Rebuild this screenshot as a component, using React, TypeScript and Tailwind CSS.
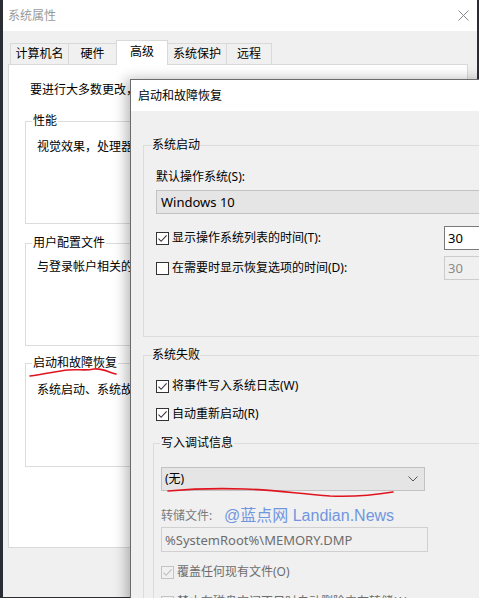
import React from 'react';

const FONT = "font-['Noto_Sans','Noto_Sans_CJK_SC',sans-serif]";

function Check({ checked, disabled }: { checked?: boolean; disabled?: boolean }) {
  return (
    <span
      className={`w-[13px] h-[13px] border flex items-center justify-center shrink-0 ${
        disabled ? 'border-[#c4c4c4] bg-[#f0f0f0]' : 'border-[#333333] bg-white'
      }`}
    >
      {checked && (
        <svg width="11" height="11" viewBox="0 0 11 11">
          <path
            d="M1.5 5.6 L4.1 8.3 L9.6 2.4"
            fill="none"
            stroke={disabled ? '#bdbdbd' : '#333333'}
            strokeWidth="1.1"
          />
        </svg>
      )}
    </span>
  );
}

function Chevron() {
  return (
    <svg width="10" height="6" viewBox="0 0 10 6">
      <path d="M0.5 0.5 L5 5 L9.5 0.5" fill="none" stroke="#555" strokeWidth="1" />
    </svg>
  );
}

export default function App() {
  return (
    <div className={`relative w-[479px] h-[598px] overflow-hidden bg-[#2a2d33] text-[12px] leading-[16px] text-black ${FONT}`}>
      {/* 系统属性 (back window) */}
      <div className="absolute left-[3px] top-0 w-[474px] h-[597px] bg-[#f0f0f0] flex flex-col">
        <div className="relative h-[31px] shrink-0 bg-white flex items-center pl-[5px] text-[#9a9a9a]">
          系统属性
          <svg className="absolute left-[455px] top-[10px]" width="11" height="11" viewBox="0 0 11 11">
            <path d="M0.5 0.5 L10.5 10.5 M10.5 0.5 L0.5 10.5" stroke="#8a8a8a" strokeWidth="1" />
          </svg>
        </div>

        {/* tabs */}
        <div className="flex items-end pt-[9px] pl-[7px] h-[33px] shrink-0">
          <div className="w-[59px] h-[21px] border border-b-0 border-[#d9d9d9] flex items-center justify-center">计算机名</div>
          <div className="w-[48px] h-[21px] border border-b-0 border-l-0 border-[#d9d9d9] flex items-center justify-center">硬件</div>
          <div className="relative z-10 w-[52px] h-[25px] -mb-[1px] -ml-[1px] bg-white border border-b-0 border-[#d9d9d9] flex items-center justify-center pb-[2px]">高级</div>
          <div className="w-[59px] h-[21px] border border-b-0 border-l-0 border-[#d9d9d9] flex items-center justify-center">系统保护</div>
          <div className="w-[45px] h-[21px] border border-b-0 border-l-0 border-[#d9d9d9] flex items-center justify-center">远程</div>
        </div>

        {/* panel */}
        <div className="ml-[5px] w-[460px] h-[484px] bg-white border border-[#d9d9d9] pl-[16px] flex flex-col">
          <div className="mt-[17px] pl-[5px] whitespace-nowrap">要进行大多数更改，你必须作为管理员登录。</div>

          <fieldset className="mt-[15px] w-[418px] h-[111px] border border-[#dcdcdc]">
            <legend className="ml-[6px] px-[1px]">性能</legend>
            <div className="mt-[10px] pl-[11px] whitespace-nowrap">视觉效果，处理器计划，内存使用，以及虚拟内存</div>
          </fieldset>

          <fieldset className="mt-[11px] w-[418px] h-[111px] border border-[#dcdcdc]">
            <legend className="ml-[6px] px-[1px]">用户配置文件</legend>
            <div className="mt-[8px] pl-[11px] whitespace-nowrap">与登录帐户相关的桌面设置</div>
          </fieldset>

          <fieldset className="mt-[9px] w-[418px] h-[112px] border border-[#dcdcdc]">
            <legend className="ml-[6px] px-[1px]">启动和故障恢复</legend>
            <div className="mt-[11px] pl-[11px] whitespace-nowrap">系统启动、系统故障和调试信息</div>
          </fieldset>
        </div>
      </div>

      {/* 启动和故障恢复 (front dialog) */}
      <div className="absolute left-[130px] top-[79px] w-[380px] h-[540px] border border-[#6b6b6b] bg-[#f0f0f0] shadow-[-4px_0_12px_rgba(0,0,0,0.28)] flex flex-col">
        <div className="h-[31px] shrink-0 bg-white flex items-center pl-[7px]">启动和故障恢复</div>

        <div className="flex flex-col pl-[12px]">
          <fieldset className="mt-[26px] w-[400px] border border-[#dcdcdc] pb-[56px]">
            <legend className="ml-[8px] px-[0px]">系统启动</legend>
            <div className="ml-[12px] mt-[16px]">默认操作系统(S):</div>
            <div className="ml-[12px] mt-[5px] h-[24px] bg-[#e5e5e5] border border-[#c2c2c2] flex items-center pl-[4px] text-[13px]">
              Windows 10
            </div>
            <div className="mt-[12px] h-[24px] flex items-center">
              <div className="w-[300px] pl-[12px] flex items-center gap-[3px]">
                <Check checked />
                <span>显示操作系统列表的时间(T):</span>
              </div>
              <div className="w-[60px] h-[24px] bg-white border border-[#7a7a7a] flex items-center pl-[3px] text-[13px]">30</div>
            </div>
            <div className="mt-[6px] h-[24px] flex items-center">
              <div className="w-[300px] pl-[12px] flex items-center gap-[3px]">
                <Check />
                <span>在需要时显示恢复选项的时间(D):</span>
              </div>
              <div className="w-[60px] h-[24px] bg-[#f0f0f0] border border-[#cccccc] flex items-center pl-[3px] text-[13px] text-[#8a8a8a]">30</div>
            </div>
          </fieldset>

          <fieldset className="mt-[10px] w-[400px] h-[300px] border border-[#dcdcdc]">
            <legend className="ml-[8px] px-[0px]">系统失败</legend>
            <div className="ml-[12px] mt-[15px] flex items-center gap-[3px]">
              <Check checked />
              <span>将事件写入系统日志(W)</span>
            </div>
            <div className="ml-[12px] mt-[12px] flex items-center gap-[3px]">
              <Check checked />
              <span>自动重新启动(R)</span>
            </div>

            <fieldset className="ml-[9px] mt-[13px] w-[380px] h-[200px] border border-[#dcdcdc]">
              <legend className="ml-[6px] px-[1px]">写入调试信息</legend>
              <div className="ml-[7px] mt-[16px] w-[264px] h-[24px] bg-[#e5e5e5] border border-[#c2c2c2] flex items-center justify-between pl-[3px] pr-[6px]">
                <span>(无)</span>
                <Chevron />
              </div>
              <div className="ml-[7px] mt-[17px] h-[16px] flex items-center whitespace-nowrap">
                <span className="text-[#7a7a7a] w-[63px]">转储文件:</span>
                <span className="text-[16px] leading-[20px] text-[#7096df] font-['Liberation_Sans','Noto_Sans_CJK_SC',sans-serif]">@蓝点网 Landian.News</span>
              </div>
              <div className="ml-[7px] mt-[3px] w-[267px] h-[25px] bg-[#f0f0f0] border border-[#d0d0d0] flex items-center pl-[3px] text-[13px] text-[#6d6d6d]">
                %SystemRoot%\MEMORY.DMP
              </div>
              <div className="ml-[7px] mt-[12px] flex items-center gap-[3px] text-[#6d6d6d]">
                <Check checked disabled />
                <span>覆盖任何现有文件(O)</span>
              </div>
              <div className="ml-[7px] mt-[14px] flex items-center gap-[3px] text-[#6d6d6d] whitespace-nowrap">
                <Check disabled />
                <span>禁止在磁盘空间不足时自动删除内存转储(A)</span>
              </div>
            </fieldset>
          </fieldset>
        </div>
      </div>

      {/* red annotation strokes */}
      <svg className="absolute left-0 top-0 pointer-events-none" width="479" height="598" viewBox="0 0 479 598">
        <path
          d="M30 376 C 45 374, 58 371, 68 370 C 78 369, 86 371, 94 369 C 102 368, 108 372, 116 374"
          fill="none"
          stroke="#e0141e"
          strokeWidth="1.6"
          strokeLinecap="round"
        />
        <path
          d="M168 491 C 190 489, 215 488, 245 489 C 275 490, 300 494, 330 496 C 355 497, 375 495, 393 492"
          fill="none"
          stroke="#e0141e"
          strokeWidth="1.6"
          strokeLinecap="round"
        />
      </svg>
    </div>
  );
}
